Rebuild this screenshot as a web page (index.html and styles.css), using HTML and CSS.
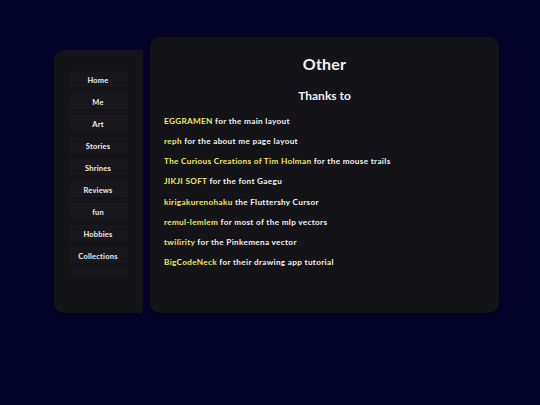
FILE: index.html
```html
<!DOCTYPE html>
<html lang="en">
<head>
<meta charset="utf-8">
<title>Other</title>
<link rel="stylesheet" href="styles.css">
</head>
<body>
<div class="layout">
  <aside class="sidebar">
    <nav class="nav">
      <a class="nav-btn" href="#">Home</a>
      <a class="nav-btn" href="#">Me</a>
      <a class="nav-btn" href="#">Art</a>
      <a class="nav-btn" href="#">Stories</a>
      <a class="nav-btn" href="#">Shrines</a>
      <a class="nav-btn" href="#">Reviews</a>
      <a class="nav-btn" href="#">fun</a>
      <a class="nav-btn" href="#">Hobbies</a>
      <a class="nav-btn" href="#">Collections</a>
      <a class="nav-btn" href="#">Links</a>
    </nav>
  </aside>
  <main class="panel">
    <h1 class="title">Other</h1>
    <h2 class="subtitle">Thanks to</h2>
    <ul class="credits">
      <li><span class="name">EGGRAMEN</span> for the main layout</li>
      <li><span class="name">reph</span> for the about me page layout</li>
      <li><span class="name">The Curious Creations of Tim Holman</span> for the mouse trails</li>
      <li><span class="name">JIKJI SOFT</span> for the font Gaegu</li>
      <li><span class="name">kirigakurenohaku</span> the Fluttershy Cursor</li>
      <li><span class="name">remul-lemlem</span> for most of the mlp vectors</li>
      <li><span class="name">twilirity</span> for the Pinkemena vector</li>
      <li><span class="name">BigCodeNeck</span> for their drawing app tutorial</li>
    </ul>
  </main>
</div>
</body>
</html>
```
FILE: styles.css
```css
html, body {
  margin: 0;
  padding: 0;
}
body {
  background: #04032a;
  font-family: "Lato", "Open Sans", sans-serif;
  color: #f2f2f2;
  width: 540px;
  height: 405px;
  overflow: hidden;
}
.layout {
  display: flex;
  align-items: flex-start;
  gap: 7px;
  padding: 37px 0 0 54px;
}
.sidebar {
  width: 89px;
  height: 263px;
  margin-top: 13px;
  background: #141317;
  border-radius: 10px 0 3px 10px;
  box-shadow: 0 2px 4px rgba(0,0,0,0.5);
}
.nav {
  display: flex;
  flex-direction: column;
  align-items: center;
  gap: 6px;
  margin-top: 16px;
  padding-top: 5px;
  height: 204px;
  overflow: hidden;
  padding-right: 1px;
}
.nav-btn {
  flex: none;
  width: 59px;
  height: 16px;
  line-height: 20px;
  text-align: center;
  background: #18171b;
  color: #eeeeee;
  font-size: 7.5px;
  font-weight: 700;
  text-decoration: none;
  letter-spacing: 0.2px;
}
.panel {
  width: 349px;
  height: 276px;
  box-sizing: border-box;
  padding: 17px 14px 0;
  background: #141317;
  border-radius: 10px;
  box-shadow: 0 2px 4px rgba(0,0,0,0.5);
}
.title {
  margin: 0;
  text-align: center;
  font-size: 16px;
  line-height: 20px;
  font-weight: 700;
  letter-spacing: 0.2px;
}
.subtitle {
  margin: 15px 0 0;
  text-align: center;
  font-size: 12px;
  line-height: 14px;
  font-weight: 700;
}
.credits {
  list-style: none;
  margin: 8px 0 0;
  padding: 0;
  font-size: 8.2px;
  line-height: 20.15px;
  font-weight: 700;
  letter-spacing: 0.32px;
}
.name {
  color: #efe766;
}
```
